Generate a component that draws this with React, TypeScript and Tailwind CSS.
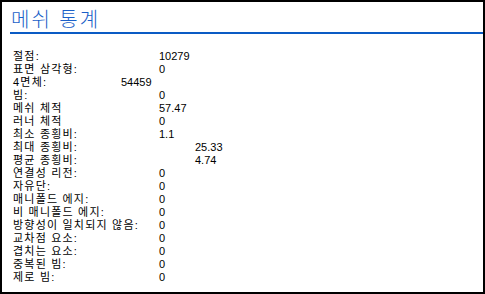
import React from "react";

const rows: { label: string; value: string; w: string }[] = [
  { label: "절점:", value: "10279", w: "w-[146px]" },
  { label: "표면 삼각형:", value: "0", w: "w-[146px]" },
  { label: "4면체:", value: "54459", w: "w-[108px]" },
  { label: "빔:", value: "0", w: "w-[146px]" },
  { label: "메쉬 체적", value: "57.47", w: "w-[146px]" },
  { label: "러너 체적", value: "0", w: "w-[146px]" },
  { label: "최소 종횡비:", value: "1.1", w: "w-[146px]" },
  { label: "최대 종횡비:", value: "25.33", w: "w-[182px]" },
  { label: "평균 종횡비:", value: "4.74", w: "w-[182px]" },
  { label: "연결성 리전:", value: "0", w: "w-[146px]" },
  { label: "자유단:", value: "0", w: "w-[146px]" },
  { label: "매니폴드 에지:", value: "0", w: "w-[146px]" },
  { label: "비 매니폴드 에지:", value: "0", w: "w-[146px]" },
  { label: "방향성이 일치되지 않음:", value: "0", w: "w-[146px]" },
  { label: "교차점 요소:", value: "0", w: "w-[146px]" },
  { label: "겹치는 요소:", value: "0", w: "w-[146px]" },
  { label: "중복된 빔:", value: "0", w: "w-[146px]" },
  { label: "제로 빔:", value: "0", w: "w-[146px]" },
];

export default function App() {
  return (
    <div
      className="w-[485px] h-[294px] border-2 border-black bg-white text-black overflow-hidden"
      style={{ fontFamily: '"Liberation Sans", Arial, "Noto Sans CJK KR", sans-serif' }}
    >
      <div className="ml-[8px] mt-[7px] border-b-2 border-[#0a5bc4] pl-[1px]">
        <div className="text-[20px] leading-[23px] tracking-[2px] text-[#1a5fc8]" style={{ fontWeight: 300 }}>
          메쉬 통계
        </div>
      </div>
      <div className="pl-[11px] pt-[16px] text-[11px] leading-[13px]">
        {rows.map((r, i) => (
          <div key={i} className="flex h-[13px] leading-[13px]">
            <div className={`${r.w} shrink-0 whitespace-nowrap tracking-[1.2px]`}>{r.label}</div>
            <div className="whitespace-nowrap">{r.value}</div>
          </div>
        ))}
      </div>
    </div>
  );
}
